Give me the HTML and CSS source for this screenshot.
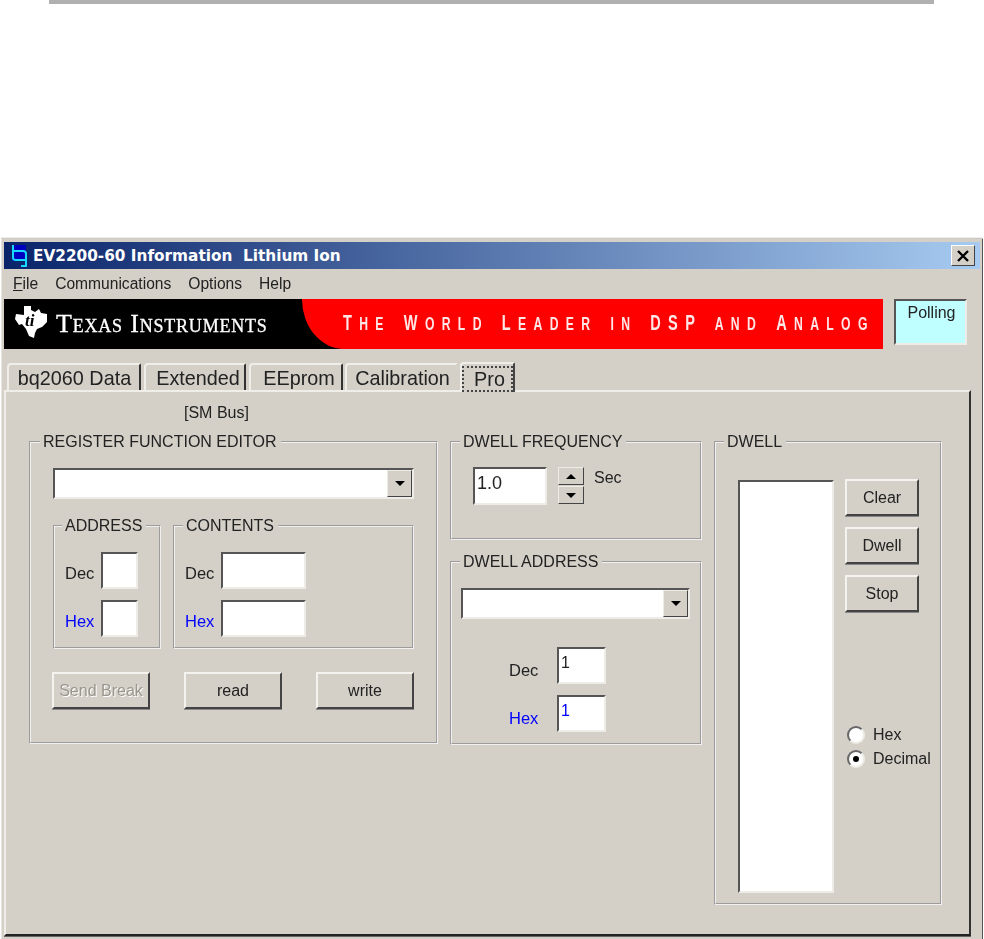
FILE: index.html
```html
<!DOCTYPE html>
<html lang="en">
<head>
<meta charset="utf-8">
<title>EV2200-60 Information</title>
<link rel="stylesheet" href="styles.css">
</head>
<body>
<div class="rule"></div>
<div class="window">
  <div class="titlebar">
    <svg class="appicon" width="18" height="24" viewBox="0 0 18 24"><rect x="1" y="1" width="14" height="16" fill="#0000c0"/><path d="M2 1V14Q2 16 5 16H15M3 7H12Q15 7 15 10V22H10" fill="none" stroke="#19d8ff" stroke-width="2"/></svg>
    <span class="titletext">EV2200-60 Information&nbsp; Lithium Ion</span>
    <span class="close"><svg width="14" height="12" viewBox="0 0 14 12"><path d="M2 1L12 11M12 1L2 11" stroke="#000" stroke-width="2.4"/></svg></span>
  </div>
  <nav class="menubar">
    <span><u>F</u>ile</span><span>Communications</span><span>Options</span><span>Help</span>
  </nav>
  <div class="bannerrow">
    <div class="banner">
      <div class="brand">
        <svg class="timark" width="34" height="34" viewBox="0 0 34 34"><path d="M10 1H17V5L21 7L25 4L27 8L33 9L33 17L28 22L23 24L21 28L20 33L15 31L12 24L8 19L5 20L1 14L2 9L10 10Z" fill="#fff"/><text x="11" y="21" class="timark-text">ti</text></svg>
        <span class="brandname">Texas Instruments</span>
      </div>
      <div class="tagline"><span class="tagtext"><span class="cap">T</span>he <span class="cap">W</span>orld <span class="cap">L</span>eader in <span class="cap">DSP</span> and <span class="cap">A</span>nalog</span></div>
    </div>
    <div class="polling">Polling</div>
  </div>
  <div class="tabs">
    <span class="tab t1">bq2060 Data</span>
    <span class="tab t2">Extended</span>
    <span class="tab t3">EEprom</span>
    <span class="tab t4">Calibration</span>
    <span class="tab active"><span class="focus">Pro</span></span>
  </div>
  <section class="panel">
    <p class="bus">[SM Bus]</p>
    <div class="columns">
      <fieldset class="group register">
        <legend>REGISTER FUNCTION EDITOR</legend>
        <div class="combo wide"><span class="combo-field"></span><span class="combo-btn"><i class="down"></i></span></div>
        <div class="subgroups">
          <fieldset class="group address">
            <legend>ADDRESS</legend>
            <div class="row"><label>Dec</label><span class="input small"></span></div>
            <div class="row"><label class="blue">Hex</label><span class="input small"></span></div>
          </fieldset>
          <fieldset class="group contents">
            <legend>CONTENTS</legend>
            <div class="row"><label>Dec</label><span class="input medium"></span></div>
            <div class="row"><label class="blue">Hex</label><span class="input medium"></span></div>
          </fieldset>
        </div>
        <div class="actions">
          <span class="btn disabled">Send Break</span>
          <span class="btn">read</span>
          <span class="btn">write</span>
        </div>
      </fieldset>
      <div class="middle">
        <fieldset class="group frequency">
          <legend>DWELL FREQUENCY</legend>
          <div class="freqrow">
            <span class="input freq">1.0</span>
            <span class="spinner"><span class="spin"><i class="up"></i></span><span class="spin"><i class="down"></i></span></span>
            <span class="sec">Sec</span>
          </div>
        </fieldset>
        <fieldset class="group dwelladdr">
          <legend>DWELL ADDRESS</legend>
          <div class="combo narrow"><span class="combo-field"></span><span class="combo-btn"><i class="down"></i></span></div>
          <div class="addrrows">
            <div class="row"><label>Dec</label><span class="input addr">1</span></div>
            <div class="row"><label class="blue">Hex</label><span class="input addr blue">1</span></div>
          </div>
        </fieldset>
      </div>
      <fieldset class="group dwell">
        <legend>DWELL</legend>
        <div class="dwellbody">
          <div class="listbox"></div>
          <div class="side">
            <span class="btn sidebtn">Clear</span>
            <span class="btn sidebtn">Dwell</span>
            <span class="btn sidebtn">Stop</span>
            <div class="radios">
              <div class="radio"><span class="dot"></span>Hex</div>
              <div class="radio"><span class="dot on"></span>Decimal</div>
            </div>
          </div>
        </div>
      </fieldset>
    </div>
  </section>
</div>
</body>
</html>
```

FILE: styles.css
```css
* { box-sizing: border-box; }
html, body { margin: 0; padding: 0; background: #fff; }
body { font-family: "Liberation Sans", Arial, sans-serif; font-size: 16px; color: #222; height: 939px; overflow: hidden; }

.rule { height: 4px; margin: 0 50px 0 49px; background: #b0b0b0; }

.window {
  margin: 234px 1px 0 1px;
  height: 701px;
  background: #d4d0c8;
  border-top: 1px solid #cfcbc3;
  border-left: 1px solid #e8e6e0;
  padding: 3px 3px 0 2px;
  box-shadow: inset -1px 0 0 #555, 0 -1px 0 #eee;
  filter: blur(0.35px);
  display: flex;
  flex-direction: column;
}

.titlebar {
  height: 27px;
  flex: none;
  display: flex;
  align-items: center;
  padding: 0 5px 0 7px;
  background: linear-gradient(90deg, #0a246a, #a6caf0);
  color: #fff;
}
.appicon { flex: none; margin-right: 4px; }
.titletext { font: bold 15.3px "DejaVu Sans", Verdana, sans-serif; flex: 1; white-space: nowrap; }
.close {
  width: 24px; height: 21px;
  display: flex; align-items: center; justify-content: center;
  background: #d4d0c8;
  border: 1px solid; border-color: #fff #444 #444 #fff;
}

.menubar {
  height: 30px;
  flex: none;
  display: flex;
  align-items: center;
  gap: 17px;
  padding-left: 9px;
  font-size: 15.6px;
}

.bannerrow { display: flex; flex: none; height: 50px; }
.banner { width: 879px; height: 50px; background: #000; position: relative; display: flex; }
.brand { width: 298px; flex: none; display: flex; align-items: center; padding-left: 10px; color: #fff; }
.timark { flex: none; margin-right: 8px; margin-top: -4px; }
.timark-text { font: italic bold 17px "Liberation Serif", serif; fill: #000; }
.brandname { font: 26px "Liberation Serif", serif; font-variant: small-caps; letter-spacing: 0.8px; white-space: nowrap; -webkit-text-stroke: 0.3px #fff; }
.tagline {
  flex: 1;
  min-width: 0;
  background: #f00;
  border-bottom-left-radius: 42px 50px;
  padding: 11px 0 0 41px;
  overflow: hidden;
}
.tagtext {
  display: block;
  width: 840px;
  transform: scaleX(0.66);
  transform-origin: left center;
  color: #ffe6e6;
  font: bold 18.5px/25px "Liberation Sans", sans-serif;
  text-transform: uppercase;
  letter-spacing: 11.1px;
  word-spacing: 3.5px;
  white-space: nowrap;
}
.cap { font-size: 22px; }
.polling {
  width: 73px; height: 46px;
  margin-left: 11px;
  background: #bfffff;
  border: 2px solid; border-color: #555 #eeece6 #eeece6 #555;
  text-align: center;
  padding: 3px 0 0 2px;
  line-height: 18px;
}

.tabs { flex: none; display: flex; align-items: flex-end; height: 41px; padding-left: 3px; font-size: 19.8px; position: relative; z-index: 1; }
.tab {
  height: 27px;
  display: flex; align-items: center; justify-content: center;
  border-top: 2px solid #f0eee8;
  border-left: 2px solid #f0eee8;
  border-right: 2px solid #333;
  border-radius: 4px 2px 0 0;
  padding-top: 1px;
  margin-right: 3px;
}
.t1 { width: 134px; padding-left: 1px; }
.t2 { width: 102px; padding-left: 6px; }
.t3 { width: 94px; margin-right: 2px; padding-left: 6px; }
.t4 { width: 113px; margin-right: 2px; padding-left: 2px; border-right-color: #d4d0c8; }
.active { width: 55px; height: 30px; margin-right: 0; margin-bottom: -2px; background: #d4d0c8; border-right: 2px solid #444; }
.focus { border: 2px dotted #444; padding: 0 0 0 4px; height: 26px; width: 51px; display: block; line-height: 22px; text-align: center; }

.panel {
  flex: none;
  width: 967px;
  height: 546px;
  border-top: 2px solid #f0eee8;
  border-left: 2px solid #f0eee8;
  border-right: 2px solid #333;
  border-bottom: 2px solid #222;
  padding-left: 23px;
  font-size: 16px;
  box-shadow: 0 1px 0 #666;
}
.bus { margin: 12px 0 0 155px; height: 18px; line-height: 18px; }

.columns { display: flex; gap: 12px; align-items: flex-start; margin-top: 11px; }
.middle { width: 252px; display: flex; flex-direction: column; gap: 13px; }

.group {
  margin: 0;
  min-width: 0;
  border: 2px groove #f0f0f0;
  padding: 0;
}
.group legend { padding: 0 4px 0 3px; line-height: 18px; height: 18px; white-space: nowrap; }

.register { width: 409px; height: 311px; padding: 17px 0 0 22px; }
.register > legend { margin-left: -13px; }
.frequency { height: 107px; padding: 16px 0 0 21px; }
.frequency legend { margin-left: -13px; }
.dwelladdr { height: 192px; padding: 17px 0 0 9px; }
.dwelladdr legend { margin-left: -1px; }
.dwell { width: 228px; height: 472px; padding: 28px 0 0 22px; }
.dwell legend { margin-left: -14px; }

.combo { display: flex; height: 31px; border: 2px solid; border-color: #555 #eeece6 #eeece6 #555; background: #fff; }
.wide { width: 361px; }
.narrow { width: 229px; }
.combo-field { flex: 1; }
.combo-btn {
  width: 25px; display: flex; align-items: center; justify-content: center;
  background: #d4d0c8;
  border: 1px solid; border-color: #eeece6 #444 #444 #eeece6;
}
.up, .down { display: block; width: 0; height: 0; border-left: 5px solid transparent; border-right: 5px solid transparent; }
.down { border-top: 5px solid #000; }
.up { border-bottom: 5px solid #000; }

.subgroups { display: flex; gap: 12px; margin-top: 18px; }
.address { width: 108px; height: 132px; padding: 17px 0 0 10px; }
.contents { width: 241px; height: 132px; padding: 17px 0 0 10px; }
.address > legend { margin-left: -3px; }
.contents > legend { margin-left: -2px; }

.row { display: flex; align-items: center; height: 37px; margin-bottom: 11px; }
.row label { width: 36px; flex: none; font-size: 16.5px; padding-top: 6px; }
.blue { color: #0000ff; }

.input {
  display: block;
  height: 37px;
  background: #fff;
  border: 2px solid; border-color: #555 #eeece6 #eeece6 #555;
  line-height: 18px;
  padding-left: 2px;
}
.small { width: 37px; }
.medium { width: 85px; }
.freq { width: 74px; height: 38px; padding: 5px 0 0 2px; font-size: 18px; }
.addr { width: 49px; margin-left: 12px; padding-top: 5px; }

.actions { display: flex; justify-content: space-between; width: 362px; margin: 23px 0 0 -1px; }
.btn {
  display: flex; align-items: center; justify-content: center;
  width: 98px; height: 37px;
  background: #d4d0c8;
  border: 2px solid; border-color: #f5f3ef #444 #444 #f5f3ef;
  box-shadow: 0 1px 0 #888;
}
.disabled { color: #9a968e; text-shadow: 1px 1px 0 #fff; }

.freqrow { display: flex; align-items: flex-start; }
.spinner { display: flex; flex-direction: column; gap: 1px; margin: 0 0 0 11px; }
.spin {
  width: 26px; height: 18px;
  display: flex; align-items: center; justify-content: center;
  background: #d4d0c8;
  border: 1px solid; border-color: #eeece6 #444 #444 #eeece6;
}
.sec { margin: 2px 0 0 10px; }

.addrrows { margin: 28px 0 0 48px; }
.addrrows .row { margin-bottom: 11px; }
.addrrows .row label { padding-top: 10px; }

.dwellbody { display: flex; gap: 11px; align-items: flex-start; }
.listbox { width: 96px; height: 413px; background: #fff; border: 2px solid; border-color: #555 #eeece6 #eeece6 #555; margin-top: 1px; }
.side { display: flex; flex-direction: column; }
.sidebtn { width: 74px; margin-bottom: 11px; }
.radios { margin: 100px 0 0 2px; }
.radio { display: flex; align-items: center; height: 24px; white-space: nowrap; }
.dot { width: 18px; height: 18px; border-radius: 50%; background: #fff; border: 2px solid; border-color: #666 #eeece6 #eeece6 #666; margin-right: 8px; flex: none; position: relative; }
.dot.on::after { content: ""; position: absolute; left: 4px; top: 4px; width: 6px; height: 6px; border-radius: 50%; background: #000; }
```
